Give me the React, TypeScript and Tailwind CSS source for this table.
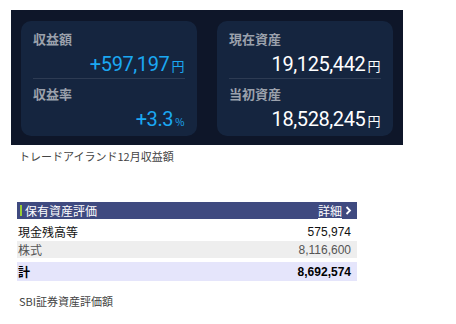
import { ReactNode } from 'react'

const jp = "font-['Noto_Sans_CJK_JP',sans-serif]"

type Metric = { label: string; value: string; unit: string; accent?: boolean }

const cards: Metric[][] = [
  [
    { label: '収益額', value: '+597,197', unit: '円', accent: true },
    { label: '収益率', value: '+3.3', unit: '%', accent: true },
  ],
  [
    { label: '現在資産', value: '19,125,442', unit: '円' },
    { label: '当初資産', value: '18,528,245', unit: '円' },
  ],
]

const rows = [
  { label: '現金残高等', value: '575,974', className: 'text-[#111]', bg: 'bg-white', extra: 'mt-[3px] h-[19px]' },
  { label: '株式', value: '8,116,600', className: 'text-[#555]', bg: 'bg-[#eeeeee]', extra: 'h-[17px]' },
  { label: '計', value: '8,692,574', className: 'text-black font-bold', bg: 'bg-[#e5e5fb]', extra: 'mt-[4px] h-[19px]' },
]

const MetricBlock = ({ m }: { m: Metric }) => (
  <div>
    <div className={`${jp} h-[20px] text-[13px] leading-[20px] font-bold text-[#9ba1ac]`}>{m.label}</div>
    <div
      className={`mt-[3px] h-[24px] pr-[1px] text-right font-['Roboto',sans-serif] text-[20px] leading-[24px] tracking-[-0.4px] ${
        m.accent ? 'text-[#1ba8f2]' : 'text-white'
      }`}
    >
      {m.value}
      <span className={`${jp} ml-[2px] ${m.unit === '%' ? 'text-[10px]' : 'text-[13px]'}`}>{m.unit}</span>
    </div>
  </div>
)

const Caption = ({ children }: { children: ReactNode }) => (
  <p className={`${jp} pl-[8px] text-[11px] leading-[14px] text-[#444]`}>{children}</p>
)

export default function App() {
  return (
    <div className="min-h-screen bg-white pt-[10px] pl-[11px]">
      <div className="grid h-[135px] w-[392px] grid-cols-2 gap-[20px] bg-[#0e1629] px-[10px] pt-[11px]">
        {cards.map((pair, i) => (
          <div key={i} className="h-[115px] rounded-[10px] bg-[#15253f] px-[12px] pt-[8px]">
            <MetricBlock m={pair[0]} />
            <div className="mt-[2px] mb-[5px] h-px bg-[#2d3b53]" />
            <MetricBlock m={pair[1]} />
          </div>
        ))}
      </div>

      <div className="mt-[4px]">
        <Caption>トレードアイランド12月収益額</Caption>
      </div>

      <div className="mt-[39px] ml-[6px] w-[340px]">
        <div className={`${jp} flex h-[17px] items-center bg-[#3f4a80] pl-[3px] pr-[5px] text-[12px] text-white`}>
          <span className="mr-[3px] h-[11px] w-[2px] bg-[#99cc33]" />
          <span className="flex-1">保有資産評価</span>
          <span className="underline underline-offset-2">詳細</span>
          <svg width="7" height="9" viewBox="0 0 7 9" className="ml-[3px]">
            <path d="M1.5 1 L5 4.5 L1.5 8" fill="none" stroke="white" strokeWidth="1.8" />
          </svg>
        </div>
        {rows.map((r) => (
          <div key={r.label} className={`flex items-center justify-between pl-[1px] pr-[6px] ${r.bg} ${r.extra} ${r.className}`}>
            <span className={`${jp} text-[12px]`}>{r.label}</span>
            <span className="font-['Liberation_Sans',sans-serif] text-[12px]">{r.value}</span>
          </div>
        ))}
      </div>

      <div className="mt-[13px]">
        <Caption>SBI証券資産評価額</Caption>
      </div>
    </div>
  )
}
